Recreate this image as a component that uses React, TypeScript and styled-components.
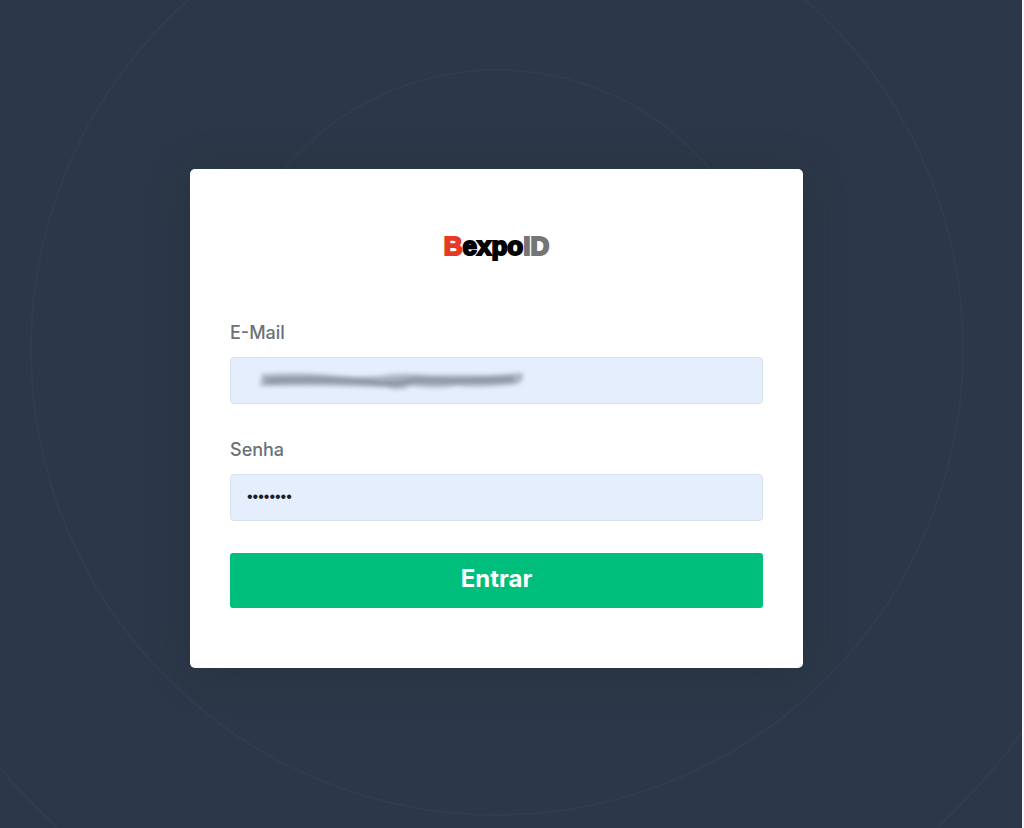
import React, { useState } from 'react';
import styled, { createGlobalStyle } from 'styled-components';

const GlobalStyle = createGlobalStyle`
  *, *::before, *::after { box-sizing: border-box; }
  body {
    margin: 0;
    background: #2c3849;
    font-family: Inter, "Liberation Sans", sans-serif;
  }
`;

const Page = styled.main`
  position: relative;
  display: flex;
  align-items: center;
  justify-content: center;
  min-height: 100vh;
  padding: 9px 29px 0 0;
  border-right: 2px solid #f4f6f8;
  background: #2c3849;
  overflow: hidden;
`;

const Rings = styled.svg`
  position: absolute;
  top: -311px;
  left: calc(50% - 674px);
  width: 1320px;
  height: 1320px;
  fill: none;
  stroke: #303d4e;
  stroke-width: 2;
  pointer-events: none;
`;

const Card = styled.form`
  position: relative;
  display: flex;
  flex-direction: column;
  width: 100%;
  max-width: 613px;
  padding: 59px 40px 60px;
  border-radius: 5px;
  background: #fff;
  box-shadow: 0 4px 40px rgba(24, 32, 44, 0.25);
`;

const Logo = styled.h1`
  margin: 0 0 56px;
  color: #000;
  font: bold 26px/36px "Liberation Sans", sans-serif;
  text-align: center;
  -webkit-text-stroke: 2px currentColor;
`;

const LogoPart = styled.span<{ $color: string }>`
  color: ${({ $color }) => $color};
`;

const Fields = styled.div`
  display: flex;
  flex-direction: column;
  gap: 33px;
  margin-bottom: 32px;
`;

const Field = styled.div`
  display: flex;
  flex-direction: column;
  gap: 11px;
`;

const Label = styled.label`
  color: #6b7178;
  font-size: 18px;
  font-weight: 500;
  line-height: 26px;
`;

const InputWrap = styled.div`
  position: relative;
  display: flex;
`;

const Input = styled.input`
  width: 100%;
  height: 47px;
  padding: 0 16px 2px;
  border: 1px solid #d8e2ec;
  border-radius: 4px;
  background: #e4eefd;
  color: #17202b;
  font: 16px "Liberation Sans", sans-serif;
  outline: none;
`;

const Smudge = styled.svg`
  position: absolute;
  top: 8px;
  left: 20px;
  width: 284px;
  height: 32px;
  pointer-events: none;
`;

const Submit = styled.button`
  height: 55px;
  padding: 0 16px 4px;
  border: 0;
  border-radius: 3px;
  background: #00bf7c;
  color: #fff;
  font: 700 24px/32px Inter, "Liberation Sans", sans-serif;
  cursor: pointer;
`;

export default function App() {
  const [email, setEmail] = useState('');
  const [password, setPassword] = useState('12345678');

  return (
    <>
      <GlobalStyle />
      <Page>
        <Rings viewBox="0 0 1320 1320" aria-hidden="true">
          <circle cx="660" cy="660" r="279" />
          <circle cx="660" cy="660" r="466" />
          <circle cx="660" cy="660" r="650" />
        </Rings>
        <Card onSubmit={(e) => e.preventDefault()}>
          <Logo>
            <LogoPart $color="#e63a27">B</LogoPart>
            <LogoPart $color="#000">expo</LogoPart>
            <LogoPart $color="#777475">ID</LogoPart>
          </Logo>
          <Fields>
            <Field>
              <Label htmlFor="email">E-Mail</Label>
              <InputWrap>
                <Input id="email" type="email" value={email} onChange={(e) => setEmail(e.target.value)} />
                {/* blurred stroke that hides the address */}
                <Smudge viewBox="0 0 284 32" aria-hidden="true">
                  <defs>
                    <filter id="soft" x="-10%" y="-60%" width="120%" height="220%">
                      <feGaussianBlur stdDeviation="2" />
                    </filter>
                  </defs>
                  <g filter="url(#soft)">
                    <path
                      d="M12 9 Q60 7 80 10 Q110 13 130 11 Q150 7 180 10 L240 10 L272 8 Q276 12 268 19 Q240 23 205 21 Q190 24 160 21 Q150 27 136 22 L80 21 L10 21 Z"
                      fill="#adb6c3"
                    />
                    <path
                      d="M16 16 Q70 13 120 17 Q142 21 165 15 Q205 17 264 14"
                      fill="none"
                      stroke="#8f98a5"
                      strokeWidth="6"
                    />
                  </g>
                </Smudge>
              </InputWrap>
            </Field>
            <Field>
              <Label htmlFor="password">Senha</Label>
              <InputWrap>
                <Input
                  id="password"
                  type="password"
                  value={password}
                  onChange={(e) => setPassword(e.target.value)}
                />
              </InputWrap>
            </Field>
          </Fields>
          <Submit type="submit">Entrar</Submit>
        </Card>
      </Page>
    </>
  );
}
